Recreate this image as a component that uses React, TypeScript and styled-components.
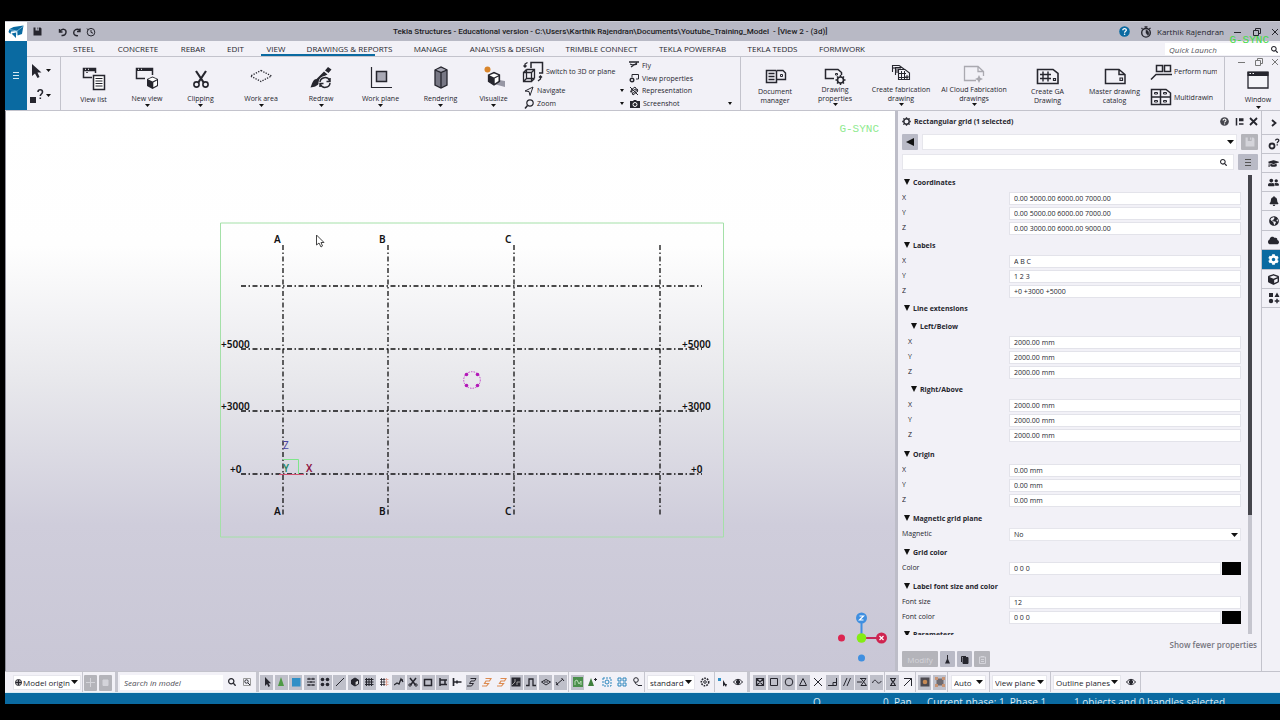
import React from "react";
import styled, { createGlobalStyle, css } from "styled-components";
import {
  FaBell, FaCloud, FaCog, FaCube, FaGlobeAmericas, FaGraduationCap, FaSearch, FaUserFriends,
} from "react-icons/fa";

const ink = "#26262e";
const blue = "#0a6aa1";
const panelBg = "#f2f1f7";
const line = "#c3c3cc";

const GlobalStyle = createGlobalStyle`
  * { box-sizing: border-box; }
  body { margin: 0; background: #000; font-family: "Open Sans", "Noto Sans", sans-serif; font-size: 7px; color: ${ink}; overflow: hidden; }
  button, input, select { font: inherit; color: inherit; border: 0; margin: 0; padding: 0; border-radius: 0; background: none; outline: none; }
  svg { display: block; flex: none; }
`;

const Screen = styled.div`
  height: 100vh;
  padding: 21px 0 16px 5px;
  display: flex;
  flex-direction: column;
`;

/* ---------- title bar ---------- */

const TitleBar = styled.header`
  flex: 0 0 20px;
  display: flex;
  align-items: center;
  background: #b8b9c5;
  border-top: 1px solid #c9cad3;
  font-size: 8px;
`;
const LogoTile = styled.div`
  width: 22px;
  align-self: stretch;
  background: #fff;
  display: grid;
  place-items: center;
`;
const QuickTools = styled.div`
  flex: 0 0 366px;
  display: flex;
  align-items: center;
  padding-left: 5px;
  gap: 2px;
`;
const IconButton = styled.button<{ $w?: number; $gap?: number }>`
  width: ${(p) => p.$w ?? 12}px;
  height: 14px;
  margin-right: ${(p) => p.$gap ?? 0}px;
  display: grid;
  place-items: center;
  flex: none;
`;
const WindowTitle = styled.h1`
  flex: 1;
  margin: 0;
  font-family: Roboto, "Open Sans", sans-serif;
  font-size: 8px;
  font-weight: 500;
  color: #1b1b22;
  white-space: pre;
`;
const Account = styled.div`
  display: flex;
  align-items: center;
  gap: 5px;
`;
const WindowButtons = styled.div`
  position: relative;
  display: flex;
  align-items: center;
  justify-content: flex-end;
  width: 56px;
  gap: 7px;
  overflow: visible;
`;
const SyncMark = styled.span<{ $faint?: boolean; $top: number; $right: number }>`
  position: absolute;
  top: ${(p) => p.$top}px;
  right: ${(p) => p.$right}px;
  font: 11px/12px "Liberation Mono", monospace;
  color: ${(p) => (p.$faint ? "#8eea8e" : "#42dc42")};
  pointer-events: none;
  z-index: 2;
`;

/* ---------- ribbon ---------- */

const HeaderBody = styled.div`
  flex: 0 0 70px;
  display: flex;
  background: ${panelBg};
  border-bottom: 1px solid ${line};
`;
const MenuButton = styled.button`
  flex: 0 0 22px;
  background: ${blue};
  display: grid;
  place-items: center;
`;
const RibbonColumn = styled.div`
  flex: 1;
  min-width: 0;
  display: flex;
  flex-direction: column;
`;
const TabBar = styled.nav`
  flex: 0 0 16px;
  display: flex;
  padding-left: 35px;
  border-bottom: 1px solid ${line};
`;
const Tab = styled.button<{ $w: number; $active?: boolean }>`
  position: relative;
  flex: 0 0 ${(p) => p.$w}px;
  font-size: 8px;
  text-align: center;
  white-space: nowrap;
  ${(p) => p.$active && css`
    &::after {
      content: "";
      position: absolute;
      left: 6px;
      bottom: 0;
      width: 114px;
      height: 2px;
      background: ${blue};
    }
  `}
`;
const QuickLaunch = styled.label`
  margin: 2px 0 1px auto;
  width: 115px;
  background: #fff;
  display: flex;
  align-items: center;
  padding: 0 2px 0 4px;
  overflow: hidden;
  input { flex: 1; min-width: 0; font-style: italic; font-size: 8px; }
  input::placeholder { color: #55555d; opacity: 1; }
`;
const Ribbon = styled.div`
  flex: 1;
  display: flex;
  min-height: 0;
`;
const PickTools = styled.div`
  flex: 0 0 34px;
  margin-right: 6px;
  border-right: 1px solid ${line};
  padding: 1px 0 2px 2px;
  display: flex;
  flex-direction: column;
  justify-content: space-around;
`;
const PickButton = styled.button`
  display: flex;
  align-items: center;
  gap: 2px;
`;
const Command = styled.button<{ $w: number; $two?: boolean; $off?: boolean; $top: number }>`
  flex: 0 0 ${(p) => p.$w}px;
  display: flex;
  flex-direction: column;
  align-items: center;
  justify-content: flex-start;
  padding-top: ${(p) => p.$top}px;
  line-height: ${(p) => (p.$two ? 9 : 12)}px;
  white-space: pre;
  text-align: center;
  > svg:first-child { opacity: ${(p) => (p.$off ? 0.35 : 1)}; margin-bottom: ${(p) => (p.$two ? 0 : 3)}px; }
  > svg + span + svg { margin-top: ${(p) => (p.$two ? 0 : -1)}px; }
`;
const Stack = styled.div<{ $w: number; $clip?: boolean }>`
  flex: 0 0 ${(p) => p.$w}px;
  display: flex;
  flex-direction: column;
  justify-content: space-around;
  overflow: ${(p) => (p.$clip ? "hidden" : "visible")};
  padding-top: 2px;
`;
const StackButton = styled.button<{ $pad?: number; $gap?: number }>`
  display: flex;
  align-items: center;
  gap: ${(p) => p.$gap ?? 3}px;
  padding-left: ${(p) => p.$pad ?? 0}px;
  white-space: nowrap;
  > svg:nth-of-type(2) { margin-left: auto; }
`;
const Rule = styled.div`
  flex: 0 0 1px;
  margin: 0 4px 0 8px;
  background: ${line};
`;
const WindowPane = styled.div`
  flex: 1 0 55px;
  margin-left: 7px;
  border-left: 1px solid ${line};
  display: flex;
  flex-direction: column;
  align-items: flex-end;
`;
const MdiButtons = styled.div`
  display: flex;
  gap: 5px;
  height: 10px;
  color: #777;
  button { height: 10px; }
`;
const WindowCommand = styled.button`
  width: 44px;
  display: flex;
  flex-direction: column;
  align-items: center;
  padding-top: 4px;
  line-height: 12px;
  > span { margin-top: 5px; }
`;

/* ---------- work space ---------- */

const Workspace = styled.main`
  flex: 1;
  min-height: 0;
  display: flex;
`;
const Viewport = styled.section`
  position: relative;
  flex: 1;
  min-width: 0;
  border-left: 1px solid #8f8f9a;
  background: linear-gradient(#fff 0, #fefefe 24%, #e8e8ec 48%, #cfcddb 74%, #c9c7d6 100%);
  svg.scene { width: 100%; height: 100%; }
  svg.scene text { font-family: "Noto Sans", sans-serif; font-size: 10px; font-weight: 600; fill: #111; }
`;
const Compass = styled.div`
  position: absolute;
  right: 5px;
  bottom: 8px;
`;

const Panel = styled.aside`
  flex: 0 0 367px;
  display: flex;
  flex-direction: column;
  background: ${panelBg};
  border-left: 3px solid #bdbdc8;
  border-right: 1px solid ${line};
  padding: 1px 3px 4px 4px;
`;
const PanelHeader = styled.div`
  flex: 0 0 18px;
  display: flex;
  align-items: center;
  gap: 3px;
  h2 { flex: 1; margin: 0; font-size: 7px; font-weight: 700; }
`;
const PanelBar = styled.div`
  flex: 0 0 16px;
  display: flex;
  align-items: stretch;
  gap: 4px;
  margin-top: 4px;
`;
const GreyButton = styled.button<{ $w: number; $off?: boolean }>`
  flex: 0 0 ${(p) => p.$w}px;
  height: 16px;
  background: ${(p) => (p.$off ? "#b4b4ba" : "#b9bac6")};
  border-radius: 1px;
  color: ${(p) => (p.$off ? "#d4d4da" : ink)};
  display: grid;
  place-items: center;
  font-size: 8px;
`;
const SearchBox = styled.label`
  flex: 1;
  background: #fff;
  border: 1px solid #e6e6ec;
  display: flex;
  align-items: center;
  padding: 0 6px;
  input { flex: 1; min-width: 0; }
`;
const SelectWrap = styled.label<{ $w?: number; $size?: number }>`
  position: relative;
  flex: ${(p) => (p.$w ? `0 0 ${p.$w}px` : "1")};
  display: flex;
  align-items: center;
  background: #fff;
  border: 1px solid #e6e6ec;
  padding-left: ${(p) => (p.$w ? 1 : 3)}px;
  font-size: ${(p) => p.$size ?? 7}px;
  select { flex: 1; min-width: 0; appearance: none; align-self: stretch; padding-left: 1px; }
  > svg:last-child { position: absolute; right: 2px; pointer-events: none; }
`;
const ScrollArea = styled.div`
  flex: 1;
  min-height: 0;
  margin-top: 3px;
  display: flex;
`;
const Properties = styled.div`
  flex: 1;
  min-width: 0;
  overflow: hidden;
`;
const ScrollTrack = styled.div`
  flex: 0 0 4px;
  margin: 2px 6px 1px 7px;
  background: #c5c5ce;
  &::before { content: ""; display: block; height: 74%; background: #45454c; }
`;
const Section = styled.section<{ $end?: number }>`
  padding-bottom: ${(p) => p.$end ?? 0}px;
`;
const SectionTitle = styled.h3<{ $nested?: boolean }>`
  margin: 0;
  height: 18px;
  padding-left: ${(p) => (p.$nested ? 9 : 2)}px;
  display: flex;
  align-items: center;
  gap: 3px;
  font-size: 7px;
  font-weight: 700;
`;
const Row = styled.label<{ $nested?: boolean }>`
  height: 15px;
  display: flex;
  align-items: center;
  padding-left: ${(p) => (p.$nested ? 6 : 0)}px;
  > span { flex: 0 0 ${(p) => (p.$nested ? 101 : 107)}px; line-height: 10px; padding-bottom: 2px; }
  > input { flex: 1; min-width: 0; height: 13px; background: #fff; border: 1px solid #e3e3ea; padding: 0 4px; }
  > label, > div { height: 13px; }
`;
const Swatch = styled.button`
  flex: 0 0 19px;
  height: 13px;
  margin-left: 1px;
  background: #000;
`;
const FewerLink = styled.a`
  align-self: flex-end;
  margin: 4px 1px 1px 0;
  font-size: 8px;
  line-height: 11px;
  font-weight: 600;
  color: #75757e;
  text-decoration: none;
`;
const PanelActions = styled.div`
  display: flex;
  gap: 2px;
`;

const SideTabs = styled.nav`
  flex: 0 0 18px;
  background: ${panelBg};
  display: flex;
  flex-direction: column;
`;
const SideTab = styled.button<{ $h?: number; $active?: boolean }>`
  height: ${(p) => p.$h ?? 19}px;
  border-bottom: 1px solid ${line};
  padding-left: 5px;
  display: grid;
  place-items: center;
  background: ${(p) => (p.$active ? blue : "transparent")};
  color: ${(p) => (p.$active ? "#fff" : ink)};
`;

/* ---------- bottom bars ---------- */

const ToolBar = styled.footer`
  flex: 0 0 22px;
  display: flex;
  align-items: center;
  background: ${panelBg};
  border-top: 1px solid ${line};
  border-bottom: 1px solid #d9ecf4;
  padding-left: 8px;
  > * { height: 15px; }
`;
const Divider = styled.div<{ $l?: number; $r?: number; $thick?: boolean }>`
  flex: 0 0 ${(p) => (p.$thick ? 3 : 1)}px;
  && { height: 20px; }
  margin: 0 ${(p) => p.$r ?? 2}px 0 ${(p) => p.$l ?? 2}px;
  background: #c6c6cf;
`;
const ToolGroup = styled.div<{ $w: number; $single?: boolean }>`
  flex: 0 0 ${(p) => p.$w}px;
  display: flex;
  justify-content: ${(p) => (p.$single ? "center" : "space-between")};
`;
const Tool = styled.button<{ $on?: boolean }>`
  width: 13px;
  height: 15px;
  display: grid;
  place-items: center;
  background: ${(p) => (p.$on ? "#bfc0ca" : "transparent")};
`;
const ModelSearch = styled.label`
  flex: 0 0 103px;
  background: #fff;
  display: flex;
  padding-left: 4px;
  input { flex: 1; min-width: 0; font-style: italic; font-size: 8px; }
  input::placeholder { color: #4c4c54; opacity: 1; }
`;
const StatusBar = styled.div`
  flex: 0 0 11px;
  display: flex;
  justify-content: flex-end;
  background: ${blue};
  color: #dcecf5;
  font-size: 10px;
  line-height: 18px;
  overflow: hidden;
`;
const StatusItem = styled.span<{ $w: number }>`
  flex: 0 0 ${(p) => p.$w}px;
  white-space: pre;
`;

/* ---------- drawings ---------- */

const Glyph = ({ s = 10, w, h, children, sw = 1 }: { s?: number; w?: number; h?: number; sw?: number; children: React.ReactNode }) => (
  <svg width={w ?? s} height={h ?? s} viewBox={`0 0 ${w ?? s} ${h ?? s}`} fill="none" stroke="currentColor" strokeWidth={sw} aria-hidden="true">
    {children}
  </svg>
);
const Caret = ({ w = 5, h = 3 }: { w?: number; h?: number }) => (
  <Glyph w={w} h={h}><path d={`M0 0H${w}L${w / 2} ${h}Z`} fill="#111" stroke="none" /></Glyph>
);
const Minimize = () => <Glyph><path d="M1 5.5H8" /></Glyph>;
const Restore = () => <Glyph><path d="M1.5 3.5h5v5h-5zM3.5 3V1.500H8.500V6.500H7" /></Glyph>;
const Close = () => <Glyph><path d="M2 2L8 8M8 2L2 8" /></Glyph>;
const Undo = () => <Glyph sw={1.4}><path d="M1.500 2V5H4.500M2 4.500C4 1 8.500 2 8 5.500C7.700 8 5.500 8.700 3.500 8.500" /></Glyph>;
const Redo = () => <Glyph sw={1.4}><path d="M8 1.500V4.500H5M7.800 3.500C5 .8 1.500 3 1.700 6C1.900 8 3.500 9 6 8.600" /></Glyph>;
const Clock = () => (
  <Glyph><circle cx="5" cy="5.200" r="3.800" /><path d="M5 3V5.400L7 6.200M1 1.500L2.500 3.200" /></Glyph>
);
const Stopwatch = () => (
  <Glyph s={12}><circle cx="6" cy="6.800" r="4.300" strokeWidth="1.400" /><path d="M6 2.500V.5M4.500 .8H7.500M9.300 3L10.500 1.800M2.500 3L1.500 2" strokeWidth="1.200" /><path d="M6 4V7L8 9.500A3.300 3.300 0 0 0 6 4Z" fill="currentColor" strokeWidth=".5" /></Glyph>
);
const Save = ({ s = 9 }: { s?: number }) => (
  <svg width={s} height={s} viewBox="0 0 9 9" fill="currentColor"><path d="M.5 .5H2.500V3.500H6V.5H7.500L8.500 1.500V8.500H.5ZM4.500 .5H5.300V2.500H4.500Z" /></svg>
);
const Help = ({ bg = blue, s = 11 }: { bg?: string; s?: number }) => (
  <svg width={s} height={s} viewBox="0 0 11 11"><circle cx="5.500" cy="5.500" r="5.300" fill={bg} /><path d="M3.800 4.200C3.800 2 7.400 2 7.300 4.200C7.200 5.300 5.600 5.300 5.600 6.700" fill="none" stroke="#fff" strokeWidth="1.300" /><circle cx="5.600" cy="8.300" r=".8" fill="#fff" /></svg>
);
const GearQ = () => (
  <Glyph s={12}><circle cx="4" cy="8" r="2.500" strokeWidth="1.800" /><path d="M7.500 2.500C7.800 .6 11 .8 10.800 2.600C10.600 3.800 9.200 3.800 9.200 5.200M9.200 6.300V7.500" strokeWidth="1.300" /></Glyph>
);
const Shapes = () => (
  <Glyph s={12}><g fill="currentColor" stroke="none"><path d="M1 1H5V5H1ZM9 .5L11.500 5H6.500Z" /><circle cx="3" cy="9" r="2.200" /><path d="M8.300 6.700H9.700V8.300H11.300V9.700H9.700V11.300H8.300V9.700H6.700V8.300H8.300Z" /></g></Glyph>
);
const Cog = () => <Glyph s={9}><circle cx="4.500" cy="4.500" r="2.700" strokeWidth="1.400" /><path d="M4.500 .2V1.500M4.500 7.500V8.800M.2 4.500H1.500M7.500 4.500H8.800M1.400 1.400L2.300 2.300M6.700 6.700L7.600 7.600M7.600 1.400L6.700 2.300M1.400 7.600L2.300 6.700" strokeWidth="1.300" /></Glyph>;

const ribbonIcons: Record<string, React.ReactNode> = {
  list: <Glyph s={24}><path d="M10 10.500H1.500V1.500H13.500V6M5 5V6M1.500 3.500H13.500" strokeWidth="1.500" /><path d="M1 1H14V4H1Z" fill="currentColor" stroke="none" /><path d="M3 2.300H4M6 2.300H7" stroke="#fff" /><path d="M11.500 8.500H22.500V22.500H11.500Z" strokeWidth="1.500" fill="#fff" /><path d="M13.500 11.500H20.500M13.500 14H20.500M13.500 16.500H20.500M13.500 19H20.500" strokeWidth="1.200" /></Glyph>,
  newview: <Glyph s={24}><path d="M10 12.500H1.500V2.500H17.500V9" strokeWidth="1.500" /><path d="M1 2H18V5H1Z" fill="currentColor" stroke="none" /><path d="M3 3.300H4M6 3.300H7" stroke="#fff" /><path d="M12 13L17.500 10.500L23 13V20L17.500 23L12 20Z" fill={ink} stroke="none" /><path d="M13 13.300L17.500 11.500L22 13.300L17.500 15.500ZM18.300 16.500L22 14.600V19.300L18.300 21.300Z" fill="#fff" stroke="none" /></Glyph>,
  cut: <Glyph s={24}><g transform="translate(0 3)"><path d="M7 2L15 14M17 2L9 14" strokeWidth="2.200" /><circle cx="7.500" cy="15.500" r="2.600" strokeWidth="1.600" /><circle cx="16.500" cy="15.500" r="2.600" strokeWidth="1.600" /></g></Glyph>,
  area: <Glyph s={24}><path d="M12 4.500L22.500 10L12 15.500L1.500 10Z" strokeDasharray="1.300 1.300" strokeWidth="1.300" /></Glyph>,
  redraw: <Glyph s={24}><path d="M19 1L22.500 3.500L19.500 7L16 4.500ZM15 5.500L18.500 8.500C14 10 11 13 10 17C9 20 5 21 1.500 21.500C3 18 4 13 7.500 13Z" fill="currentColor" stroke="none" /><circle cx="16" cy="16.500" r="6.500" fill={panelBg} stroke="none" /><path d="M11 16C11.500 11 18.500 10 20.500 14.500M21 12V15.500H17.500M21 17C20.500 22 13.500 23 11.500 18.500M11 21V17.500H14.500" strokeWidth="1.500" /></Glyph>,
  plane: <Glyph s={24}><path d="M2.500 1V21.500H23" strokeWidth="1.200" /><path d="M7.500 5.500H17.500V15.500H7.500Z" fill="#a9a9b5" strokeWidth="1.500" /></Glyph>,
  render: <Glyph s={24}><path d="M6 4L12 1L18 4V19L12 22L6 19Z" fill="#777784" strokeWidth="1.300" /><path d="M6 4L12 6.500L18 4M12 6.500V22" strokeWidth="1.300" /><path d="M7.500 3.800L12 2L16.500 3.800L12 5.500Z" fill="#a9a9b5" stroke="none" /></Glyph>,
  visual: <Glyph s={24}><circle cx="5.500" cy="3.500" r="3" fill="#d9852b" stroke="none" /><path d="M17 14L23 15V21L12 18Z" fill="#9797a4" stroke="none" /><path d="M6.500 9L12 6.500L17.500 9V15.500L12 19L6.500 15.500Z" fill={ink} strokeWidth="1.300" /><path d="M7.500 9.200L12 7.500L16.500 9.200L12 11.500ZM12.700 12.500L16.500 10.500V15L12.700 17.500Z" fill="#fff" stroke="none" /></Glyph>,
  docs: <Glyph w={24} h={20}><g transform="translate(0 -1)"><path d="M13 4.500H3.500V16.500H13.500V4.500M5.500 7.500H11.500M5.500 10.500H11.500M5.500 13.500H11.500" strokeWidth="1.500" /><path d="M13.500 4.500H20L22.500 7V13.500H13.500" strokeWidth="1.400" /><path d="M17.500 8.500H19.500V10.500H17.500Z" /></g></Glyph>,
  props: <Glyph w={24} h={20}><path d="M11 13.500H2.500V4.500H15L18.500 7.500V10" strokeWidth="1.500" /><path d="M12.500 8.500H14.500V10H12.500Z" /><circle cx="17.500" cy="15" r="3" strokeWidth="1.600" /><path d="M17.500 10V12M17.500 18V20M12.500 15H14.500M20.500 15H22.500M14 11.500L15.500 13M19.500 17L21 18.500M21 11.500L19.500 13M14 18.500L15.500 17" strokeWidth="1.500" /></Glyph>,
  fab: <Glyph w={24} h={20}><g transform="translate(0 -1)"><path d="M3.500 8V1.500H10L12.500 3M6.500 11V3.500H13L15.500 5.500M10 5.500H16L20.500 9V15.500H9.500V5.500ZM5 3V5M8 6V9M6 5H12" fill="none" strokeWidth="1.100" /><path d="M10 9.500H17M10 13.500H19M12.500 7V15M15.500 7V15" /><path d="M17 12H19V14H17Z" /></g></Glyph>,
  cloud: <Glyph w={24} h={20}><path d="M14 15.500H2.500V1.500H16L21.500 6.500V11M16 1.500V6.500H21.500" strokeWidth="1.300" /><path d="M17 10L18.300 12.700L21 14L18.300 15.300L17 18L15.700 15.300L13 14L15.700 12.700Z" fill="currentColor" stroke="none" /></Glyph>,
  ga: <Glyph w={24} h={20}><g transform="translate(0 -2)"><path d="M1.500 4.500H17L22 8.500V18.500H1.500Z" strokeWidth="1.600" /><path d="M4 9.500H15M4 13.500H15M7 6.500V16.500M12 6.500V16.500" strokeWidth="1.400" /><path d="M17.500 13.500H19.500V15.500H17.500Z" strokeWidth="1.200" /></g></Glyph>,
  master: <Glyph w={24} h={20}><g transform="translate(0 -2)"><path d="M2.500 4.500H16L22 9.500V18.500H2.500ZM16 4.500V9.500H22" strokeWidth="1.500" /><path d="M17 13H19.500V15.500H17Z" strokeWidth="1.200" /></g></Glyph>,
};

const small: Record<string, React.ReactNode> = {
  arrow: <Glyph><path d="M3 0V9L5 7L6.500 10L8 9L6.500 6.300H9Z" fill="currentColor" stroke="none" /></Glyph>,
  cone: <Glyph><path d="M5 0L8 9H2Z" fill="#4f9a45" stroke="none" /></Glyph>,
  square: <Glyph><path d="M1 1H9.500V9.500H1Z" fill="#2f8fc6" stroke="none" /></Glyph>,
  waves: <Glyph><path d="M1 2H9M1 5H9M1 8H9M3 .8V3M7 .8V3M5 4V6M3 7V9M7 7V9" /></Glyph>,
  dots: <Glyph><g fill="currentColor" stroke="none"><circle cx="2.500" cy="2.500" r="1.800" /><circle cx="7.500" cy="2.500" r="1.800" /><circle cx="2.500" cy="7.500" r="1.800" /><circle cx="7.500" cy="7.500" r="1.800" /></g></Glyph>,
  line: <Glyph><path d="M1 9L9 1" /></Glyph>,
  cube: <Glyph><path d="M1.500 3L5 1L8.500 3V7L5 9L1.500 7Z" fill={ink} /><path d="M5.600 5L8 3.800V6.700L5.600 8Z" fill="#ddd" stroke="none" /></Glyph>,
  grid: <Glyph><path d="M1 2.500H9.500M1 5H9.500M1 7.500H9.500M2.500 1V9M5 1V9M7.500 1V9" strokeWidth="1.100" /></Glyph>,
  gridred: <Glyph><path d="M1 2.500H6M1 5H6M1 7.500H6M2.500 1V9M5 1V9" strokeWidth=".8" /><path d="M6 2.500H9.500M6 5H9.500M6 7.500H9.500M7.500 1V9" stroke="#e0a79a" /></Glyph>,
  curve: <Glyph><path d="M0 8L3 6L5 7L7 2L9 5M6 3H9" strokeWidth="1.300" /></Glyph>,
  scissors: <Glyph><path d="M2 1L7.500 8M8 1L2.500 8" strokeWidth="1.500" /><circle cx="2" cy="8" r="1.200" /><circle cx="8" cy="8" r="1.200" /></Glyph>,
  window: <Glyph><path d="M1.500 2.500H8.500V8.500H1.500ZM1 2.500H9" strokeWidth="1.500" /></Glyph>,
  beam: <Glyph><path d="M2 1V9M2 3H9M2 7.500H9M7 3V7.500" strokeWidth="1.500" /></Glyph>,
  bolt: <Glyph><path d="M1.500 1V9M1.500 5H9.500M5 3.500V6.500" strokeWidth="1.700" /></Glyph>,
  weld: <Glyph><path d="M3.500 1.500H9L7.500 4H4L2.500 6.500H6.500L4.500 9H0" /></Glyph>,
  weldred: <Glyph><path d="M3.500 1.500H9L7.500 4H4L2.500 6.500H6.500L4.500 9H0" stroke="#dc8a50" strokeWidth="1.200" /></Glyph>,
  fill: <Glyph><path d="M.5 .5H9.500V9.500H.5Z" fill={ink} stroke="none" /><path d="M1 8L4 5V2M6 8V5H9" stroke="#999" /></Glyph>,
  clamp: <Glyph><path d="M0 8.500H3V2H7V8.500H10" strokeWidth="1.300" /></Glyph>,
  lens: <Glyph><path d="M.5 5L5 2.500L9.500 5L5 8Z" /><path d="M3 5H7" /></Glyph>,
  slope: <Glyph><path d="M1 8L8 2M1 5L3 8.500M6.500 1L9 4" /></Glyph>,
  tree: <Glyph><path d="M0 0H10V10H0Z" fill="#4b8f4c" stroke="none" /><path d="M2 8V4L4 3L6 7L8 4V8" stroke="#b9dcb4" /></Glyph>,
  coneplus: <Glyph><path d="M4 1L7 9H1Z" fill="#3f7f3c" stroke="none" /><path d="M7 2.500H10M8.500 1V4" /></Glyph>,
  framed: <Glyph><path d="M1 1H9V9H1Z" stroke="#2c86bd" strokeDasharray="2 1" /><circle cx="5" cy="5" r="2" stroke="#2c86bd" /></Glyph>,
  cells: <Glyph><path d="M1 1H4V4H1ZM6 1H9V4H6ZM1 6H4V9H1ZM6 6H9V9H6Z" stroke="#2c86bd" /></Glyph>,
  hook: <Glyph><circle cx="4" cy="3" r="2.300" /><path d="M3 5C3 8 6 7 6 8.500H10" /></Glyph>,
  gear: <Glyph><circle cx="5" cy="5" r="1.300" /><circle cx="5" cy="5" r="3.700" strokeWidth="1.600" strokeDasharray="1.700 1" /></Glyph>,
  pick: <Glyph><path d="M0 1H3V4H0Z" fill="#2f8fc6" stroke="none" /><path d="M5 3V9.500L6.500 8L8 10L9 7H7.500Z" fill="currentColor" stroke="none" /></Glyph>,
  eye: <Glyph><path d="M.5 5C3 1.500 7 1.500 9.500 5C7 8.500 3 8.500 .5 5Z" /><circle cx="5" cy="5" r="1.700" fill="currentColor" /></Glyph>,
  boxx: <Glyph sw={1.2}><path d="M1.500 1.500H8.500V8.500H1.500ZM1.500 1.500L8.500 8.500M8.500 1.500L1.500 8.500" /></Glyph>,
  box: <Glyph><path d="M1.500 1.500H8.500V8.500H1.500Z" /></Glyph>,
  circle: <Glyph><circle cx="5" cy="5" r="3.800" /></Glyph>,
  tri: <Glyph><path d="M5 1.500L8.500 8.500H1.500Z" /></Glyph>,
  cross: <Glyph><path d="M1 1L9 9M9 1L1 9" /></Glyph>,
  perp: <Glyph><path d="M0 8.500H8.500V1M5 8V5.500H8" /></Glyph>,
  para: <Glyph><path d="M1.500 9L5 1M5 9L8.500 1" /></Glyph>,
  glassl: <Glyph><path d="M3 1.500H9L4 8.500H9.500L4 1.500M0 5H5" /></Glyph>,
  tilde: <Glyph><path d="M.5 6C2 2 4 3 5 5S8 6 9.500 4" /></Glyph>,
  glass: <Glyph><path d="M2 1.500H8M2 8.500H8M3 1.500C3 5 7 5 7 8.500M7 1.500C7 5 3 5 3 8.500" strokeWidth="1.200" /></Glyph>,
  ne: <Glyph><path d="M1 9L8.500 1.500M1 1.500H8.500V9" /></Glyph>,
  spot: <Glyph><path d="M.5 .5H9.500V9.500H.5Z" fill="#4d4a50" stroke="none" /><circle cx="5" cy="5" r="2.300" fill="#c68a55" stroke="none" /></Glyph>,
  handles: <Glyph><path d="M1.500 1.500H8.500V8.500H1.500Z" fill="#6e6a70" stroke="none" /><path d="M0 0H3V3H0ZM7 0H10V3H7ZM0 7H3V10H0ZM7 7H10V10H7Z" fill="#c99575" stroke="none" /></Glyph>,
};

/* ---------- data ---------- */

const tabs: [string, number][] = [
  ["STEEL", 44], ["CONCRETE", 64], ["REBAR", 46], ["EDIT", 39], ["VIEW", 42], ["DRAWINGS & REPORTS", 105],
  ["MANAGE", 57], ["ANALYSIS & DESIGN", 96], ["TRIMBLE CONNECT", 93], ["TEKLA POWERFAB", 89],
  ["TEKLA TEDDS", 71], ["FORMWORK", 68],
];
type Cmd = { icon: string; label: string; w: number; caret?: boolean; two?: boolean; off?: boolean };
const viewCommands: Cmd[] = [
  { icon: "list", label: "View list", w: 53 },
  { icon: "newview", label: "New view", w: 54, caret: true },
  { icon: "cut", label: "Clipping", w: 53, caret: true },
  { icon: "area", label: "Work area", w: 68, caret: true },
  { icon: "redraw", label: "Redraw", w: 52, caret: true },
  { icon: "plane", label: "Work plane", w: 67, caret: true },
  { icon: "render", label: "Rendering", w: 53, caret: true },
  { icon: "visual", label: "Visualize", w: 53, caret: true },
];
const drawingCommands: Cmd[] = [
  { icon: "docs", label: "Document\nmanager", w: 60, two: true },
  { icon: "props", label: "Drawing\nproperties", w: 60, two: true, caret: true },
  { icon: "fab", label: "Create fabrication\ndrawing", w: 72, two: true, caret: true },
  { icon: "cloud", label: "AI Cloud Fabrication\ndrawings", w: 74, two: true, caret: true, off: true },
  { icon: "ga", label: "Create GA\nDrawing", w: 73, two: true },
  { icon: "master", label: "Master drawing\ncatalog", w: 61, two: true },
];
type Field = { label: string; value: string; kind?: "color" | "select" };
type Group = { title: string; nested?: boolean; end?: number; fields: Field[] };
const xyz = (x: string, y: string, z: string): Field[] => [
  { label: "X", value: x }, { label: "Y", value: y }, { label: "Z", value: z },
];
const mm = "2000.00 mm";
const groups: Group[] = [
  { title: "Coordinates", fields: xyz("0.00 5000.00 6000.00 7000.00", "0.00 5000.00 6000.00 7000.00", "0.00 3000.00 6000.00 9000.00") },
  { title: "Labels", fields: xyz("A B C", "1 2 3", "+0 +3000 +5000") },
  { title: "Line extensions", fields: [] },
  { title: "Left/Below", nested: true, fields: xyz(mm, mm, mm) },
  { title: "Right/Above", nested: true, end: 2, fields: xyz(mm, mm, mm) },
  { title: "Origin", end: 1, fields: xyz("0.00 mm", "0.00 mm", "0.00 mm") },
  { title: "Magnetic grid plane", end: 1, fields: [{ label: "Magnetic", value: "No", kind: "select" }] },
  { title: "Grid color", end: 1, fields: [{ label: "Color", value: "0 0 0", kind: "color" }] },
  { title: "Label font size and color", fields: [{ label: "Font size", value: "12" }, { label: "Font color", value: "0 0 0", kind: "color" }] },
  { title: "Parameters", fields: [] },
];
const selectTools = "arrow cone square waves dots line cube grid gridred- curve scissors window beam bolt- weld weldred- weldred- fill clamp lens slope".split(" ");
const modelTools = "tree coneplus- framed- cells- hook-".split(" ");
const snapTools = "boxx box circle tri cross- perp para glassl tilde".split(" ");

const Tools = ({ names, w }: { names: string[]; w: number }) => (
  <ToolGroup $w={w} $single={names.length === 1}>
    {names.map((n, i) => {
      const key = n.replace("-", "");
      return <Tool key={i} $on={!n.endsWith("-")} aria-label={key}>{small[key]}</Tool>;
    })}
  </ToolGroup>
);
const CommandButton = ({ icon, label, w, caret, two, off }: Cmd) => (
  <Command $w={w} $two={two} $off={off} $top={two ? (caret ? 8 : 10) : caret ? 9 : 10}>
    {ribbonIcons[icon]}
    <span>{label}</span>
    {caret && <Caret />}
  </Command>
);
const Select = ({ label, value, w, size, icon }: { label: string; value: string; w?: number; size?: number; icon?: React.ReactNode }) => (
  <SelectWrap $w={w} $size={size}>
    {icon}
    <select aria-label={label} defaultValue={value}><option>{value}</option></select>
    <Caret w={7} h={4} />
  </SelectWrap>
);

const Scene = () => {
  const columns = [283, 388, 514, 660];
  const rows = [286, 349, 411, 474];
  return (
    <svg className="scene" role="img" aria-label="Grid view">
      <g transform="translate(-6 -111)" fill="none">
        <path d="M220.500 223H723.500V537H220.500Z" stroke="#a4e0a8" />
        <g stroke="#111" strokeWidth="1.300" strokeDasharray="5 2.500 1.500 2.500">
          {columns.map((x) => <path key={x} d={`M${x} 245V516`} />)}
          {rows.map((y) => <path key={y} d={`M241 ${y}H702`} />)}
        </g>
        {[243, 515].map((y) => (
          <g key={y}><text x="274" y={y}>A</text><text x="379" y={y}>B</text><text x="505" y={y}>C</text></g>
        ))}
        {[348, 410].map((y, i) => (
          <g key={y}><text x="221" y={y}>{i ? "+3000" : "+5000"}</text><text x="682" y={y}>{i ? "+3000" : "+5000"}</text></g>
        ))}
        <text x="230" y="473">+0</text><text x="691" y="473">+0</text>
        <path d="M283 459.500H298.500V474" stroke="#7fe58a" />
        <path d="M279 474.500H304" stroke="#d05070" />
        <text x="283" y="449" style={{ fill: "#4a44a0", fontWeight: 400 }}>Z</text>
        <text x="283" y="472" style={{ fill: "#1f8a68" }}>Y</text>
        <text x="306" y="472" style={{ fill: "#8c1140" }}>X</text>
        <circle cx="472" cy="380" r="8.300" stroke="#c23fc9" strokeDasharray="1.500 1.200" />
        <g fill="#b317b8"><circle cx="466.500" cy="374.500" r="1.800" /><circle cx="477.500" cy="374.500" r="1.800" /><circle cx="466.500" cy="385.500" r="1.800" /><circle cx="477.500" cy="385.500" r="1.800" /></g>
        <path d="M316.500 235V245L319 243L321 247L322.500 246L321 242.500H324Z" fill="#fff" stroke="#444" />
      </g>
    </svg>
  );
};

export default function App() {
  return (
    <Screen>
      <GlobalStyle />
      <TitleBar>
        <LogoTile>
          <svg width="16" height="14" viewBox="0 0 16 14"><path d="M5.500 2L15.500 .5L14 9L9.500 10.500L9 6L3 6.500L2.500 9L.5 7L1.500 4ZM3.500 8.500L8 7.500V13Z" fill={blue} /><path d="M1.500 4.500L9 6L15 1.500M9 6V10" stroke="#8fc3df" strokeWidth=".8" fill="none" /></svg>
        </LogoTile>
        <QuickTools>
          <IconButton aria-label="Save" $w={10} $gap={13}><Save /></IconButton>
          <IconButton aria-label="Undo"><Undo /></IconButton>
          <IconButton aria-label="Redo"><Redo /></IconButton>
          <IconButton aria-label="History"><Clock /></IconButton>
        </QuickTools>
        <WindowTitle>{"Tekla Structures - Educational version - C:\\Users\\Karthik Rajendran\\Documents\\Youtube_Training_Model  - [View 2 - (3d)]"}</WindowTitle>
        <Account>
          <IconButton aria-label="Help" $gap={5}><Help /></IconButton>
          <Stopwatch />
          <span>Karthik Rajendran</span>
        </Account>
        <WindowButtons>
          <IconButton aria-label="Minimize"><Minimize /></IconButton>
          <IconButton aria-label="Restore"><Restore /></IconButton>
          <IconButton aria-label="Close" $w={10}><Close /></IconButton>
          <SyncMark $top={9} $right={11}>G-SYNC</SyncMark>
        </WindowButtons>
      </TitleBar>

      <HeaderBody>
        <MenuButton aria-label="Menu"><Glyph w={6} h={7}><g stroke="#d5e8f2"><path d="M0 .5H6M0 3.500H6M0 6.500H6" /></g></Glyph></MenuButton>
        <RibbonColumn>
          <TabBar>
            {tabs.map(([name, w]) => <Tab key={name} $w={w} $active={name === "VIEW"}>{name}</Tab>)}
            <QuickLaunch><input aria-label="Quick Launch" placeholder="Quick Launch" /><FaSearch size={7} /></QuickLaunch>
          </TabBar>
          <Ribbon>
            <PickTools>
              <PickButton aria-label="Select">
                <Glyph w={15} h={16}><path d="M3 1V13L6 10.500L8.500 15L10.500 14L8.500 9.500H12.500Z" fill="currentColor" stroke="none" /></Glyph><Caret />
              </PickButton>
              <PickButton aria-label="Inquire">
                <Glyph w={15} h={16}><path d="M1 9H7V15H1Z" fill="currentColor" stroke="none" /><path d="M9 4C9 1 13.500 1 13.500 4C13.500 6 11.300 6 11.300 8M11.300 9.500V11" strokeWidth="1.600" /></Glyph><Caret />
              </PickButton>
            </PickTools>
            {viewCommands.map((c) => <CommandButton key={c.label} {...c} />)}
            <Stack $w={104}>
              <StackButton $pad={2} $gap={2}>
                <Glyph w={22} h={22}><path d="M9 7V1.500H20.500V12H17" strokeWidth="1.500" /><path d="M1.500 11.500H9.500V20.500H1.500ZM4.500 8.500H12.500V17.500M4.500 8.500V17.500H12.500M1.500 11.500L4.500 8.500M9.500 11.500L12.500 8.500M9.500 20.500L12.500 17.500M1.500 20.500L4.500 17.500" strokeWidth="1.300" /><path d="M5.500 1.500L3 3V6M1.500 4.500L3 6L4.500 4.500M16 20L18.500 18V15M17 16.500L18.500 15L20 16.500" strokeWidth="1.300" /></Glyph>
                <span>Switch to 3D or plane</span>
              </StackButton>
              <StackButton $pad={4}><Glyph><path d="M9 1L1 5L5 5.500L6 9.500Z" /></Glyph><span>Navigate</span><Caret w={4} /></StackButton>
              <StackButton $pad={4}><Glyph><circle cx="6" cy="4" r="3.200" strokeWidth="1.200" /><path d="M3.500 6.500L1 9.500" strokeWidth="1.500" /></Glyph><span>Zoom</span><Caret w={4} /></StackButton>
            </Stack>
            <Stack $w={108}>
              <StackButton $pad={5}><Glyph><path d="M0 2H10M1 4L4 5L8 4M2 7L8 3" strokeWidth="1.300" /></Glyph><span>Fly</span></StackButton>
              <StackButton $pad={5}><Glyph><path d="M3 4V1.500H9.500V6H7" /><circle cx="3" cy="7" r="1.800" strokeWidth="1.400" /></Glyph><span>View properties</span></StackButton>
              <StackButton $pad={5}><Glyph><path d="M1 1L9 9M2 4L6 1L9 5L4 9ZM1 6L7 3M3 8L9 3" /></Glyph><span>Representation</span></StackButton>
              <StackButton $pad={6}><Glyph><path d="M0 2H3L4 1H6L7 2H10V9H0Z" fill="currentColor" stroke="none" /><circle cx="5" cy="5.500" r="2" stroke="#fff" /></Glyph><span>Screenshot</span><Caret w={4} /></StackButton>
            </Stack>
            <Rule />
            {drawingCommands.map((c) => <CommandButton key={c.label} {...c} />)}
            <Stack $w={72} $clip>
              <StackButton $pad={5} $gap={2}>
                <Glyph w={22} h={18}><path d="M6.500 2.500H12.500V8.500H6.500ZM14.500 2.500H20.500V8.500H14.500ZM22 11.500H6L1 16.500" strokeWidth="1.500" /></Glyph>
                <span>Perform num</span>
              </StackButton>
              <StackButton $pad={5} $gap={2}>
                <Glyph w={22} h={18}><path d="M1.500 1.500H16L20.500 5V16.500H1.500ZM10.500 1.500V16.500M1.500 9H20.500" strokeWidth="1.500" /><path d="M4.500 4.500H7.500V6H4.500ZM13.500 4.500H16.500V6H13.500ZM4.500 12.500H7.500V14H4.500ZM13.500 12.500H16.500V14H13.500Z" /></Glyph>
                <span>Multidrawin</span>
              </StackButton>
            </Stack>
            <WindowPane>
              <MdiButtons>
                <IconButton aria-label="Minimize view"><Minimize /></IconButton>
                <IconButton aria-label="Restore view"><Restore /></IconButton>
                <IconButton aria-label="Close view" $w={10}><Close /></IconButton>
              </MdiButtons>
              <WindowCommand>
                <Glyph w={22} h={18}><path d="M1 1.500H21V17H1Z" strokeWidth="1.300" fill="#f4f4f8" /><path d="M.5 .5H21.500V5H.5Z" fill="currentColor" stroke="none" /><path d="M2.500 2.500H4M5.500 2.500H7" stroke="#fff" /></Glyph>
                <span>Window</span>
                <Caret />
              </WindowCommand>
            </WindowPane>
          </Ribbon>
        </RibbonColumn>
      </HeaderBody>

      <Workspace>
        <Viewport>
          <Scene />
          <SyncMark $faint $top={12} $right={16}>G-SYNC</SyncMark>
          <Compass>
            <svg width="54" height="54" viewBox="0 0 54 54" aria-label="View compass">
              <path d="M25.500 9V29" stroke="#3f8fe0" strokeWidth="2" /><path d="M26 29H44" stroke="#c42858" strokeWidth="2" />
              <circle cx="25.500" cy="9" r="5.500" fill="#3f8fe0" /><circle cx="45.500" cy="29" r="5.500" fill="#cf2450" />
              <circle cx="25.500" cy="29" r="4.800" fill="#84ec14" /><circle cx="5.500" cy="29" r="3.500" fill="#dc2450" /><circle cx="25.500" cy="49" r="3.500" fill="#3f8fe0" />
              <path d="M23.500 7H27.500L23.500 11H27.500M43.500 27L47.500 31M47.500 27L43.500 31" stroke="#fff" strokeWidth="1.200" fill="none" />
            </svg>
          </Compass>
        </Viewport>

        <Panel>
          <PanelHeader>
            <Cog />
            <h2>Rectangular grid (1 selected)</h2>
            <IconButton aria-label="Panel help"><Help bg="#45454d" s={9} /></IconButton>
            <IconButton aria-label="Panel layout"><Glyph s={9}><path d="M1.500 1V8.500M4 2H8.500M4 3.500H8.500M4 7H8.500" strokeWidth="1.500" /></Glyph></IconButton>
            <IconButton aria-label="Close panel" $w={10}><Glyph s={9} sw={1.8}><path d="M1 1L8 8M8 1L1 8" /></Glyph></IconButton>
          </PanelHeader>
          <PanelBar>
            <GreyButton $w={16} aria-label="Back"><Glyph s={8}><path d="M8 0V8L0 4Z" fill="#111" stroke="none" /></Glyph></GreyButton>
            <Select label="Saved properties" value="" />
            <GreyButton $w={17} $off aria-label="Save properties"><Save s={10} /></GreyButton>
          </PanelBar>
          <PanelBar>
            <SearchBox><input aria-label="Search properties" /><FaSearch size={7} /></SearchBox>
            <GreyButton $w={20} aria-label="Options"><Glyph w={6} h={7}><path d="M0 .5H6M0 3.500H6M0 6.500H6" stroke="#555" /></Glyph></GreyButton>
          </PanelBar>
          <ScrollArea>
            <Properties>
              {groups.map((g) => (
                <Section key={g.title} $end={g.end}>
                  <SectionTitle $nested={g.nested}><Caret w={6} h={6} />{g.title}</SectionTitle>
                  {g.fields.map((f) => (
                    <Row key={f.label} $nested={g.nested} as={f.kind === "select" ? "div" : "label"}>
                      <span>{f.label}</span>
                      {f.kind === "select" ? <Select label={f.label} value={f.value} /> : <input defaultValue={f.value} />}
                      {f.kind === "color" && <Swatch aria-label={`Pick ${f.label}`} />}
                    </Row>
                  ))}
                </Section>
              ))}
            </Properties>
            <ScrollTrack />
          </ScrollArea>
          <FewerLink href="#">Show fewer properties</FewerLink>
          <PanelActions>
            <GreyButton $w={36} $off>Modify</GreyButton>
            <GreyButton $w={15} aria-label="Apply"><Glyph s={9}><path d="M4 0H5V4L7 8.500H2L4 4Z" fill="currentColor" stroke="none" /></Glyph></GreyButton>
            <GreyButton $w={15} aria-label="Copy"><Glyph s={9}><path d="M1.500 7V1.500H6" /><path d="M3 2.500H8V8.500H3Z" fill="currentColor" /></Glyph></GreyButton>
            <GreyButton $w={16} $off aria-label="Paste"><Glyph s={9}><path d="M1.500 2H7.500V8.500H1.500ZM3 1.500H6M3 4.500H6M3 6.500H6" /></Glyph></GreyButton>
          </PanelActions>
        </Panel>

        <SideTabs>
          <SideTab $h={24} aria-label="Collapse"><Glyph s={8} sw={1.8}><path d="M2 1L5.500 4L2 7" /></Glyph></SideTab>
          <SideTab aria-label="Inquire"><GearQ /></SideTab>
          <SideTab aria-label="Learning"><FaGraduationCap size={11} /></SideTab>
          <SideTab aria-label="Community"><FaUserFriends size={11} /></SideTab>
          <SideTab aria-label="Notifications"><FaBell size={10} /></SideTab>
          <SideTab $h={20} aria-label="Warehouse"><FaGlobeAmericas size={10} /></SideTab>
          <SideTab aria-label="Cloud"><FaCloud size={11} /></SideTab>
          <SideTab $h={20} $active aria-label="Properties"><FaCog size={11} /></SideTab>
          <SideTab aria-label="Components"><FaCube size={11} /></SideTab>
          <SideTab aria-label="Applications"><Shapes /></SideTab>
        </SideTabs>
      </Workspace>

      <ToolBar>
        <Select label="Origin" value="Model origin" w={68} size={8} icon={<Glyph s={7}><circle cx="3.500" cy="3.500" r="3" /><path d="M.5 3.500H6.500M3.500 1V6" strokeWidth="1.500" /></Glyph>} />
        <Divider $l={1} $r={1} />
        <ToolGroup $w={28}>
          <GreyButton $w={13} $off aria-label="Add"><Glyph s={9}><path d="M4.500 0V9M0 4.500H9" /></Glyph></GreyButton>
          <GreyButton $w={13} $off aria-label="Delete"><Glyph s={7}><path d="M1 1H6V6.500H1Z" fill="currentColor" /></Glyph></GreyButton>
        </ToolGroup>
        <Divider $thick $l={3} $r={2} />
        <ModelSearch><input aria-label="Search in model" placeholder="Search in model" /></ModelSearch>
        <IconButton aria-label="Search" $w={18}><FaSearch size={8} /></IconButton>
        <IconButton aria-label="Search area"><Glyph s={8}><path d="M.5 .5H7.500V7.500H.5Z" stroke="#999" /><circle cx="3.500" cy="3.500" r="1.700" /><path d="M5 5L7 7" /></Glyph></IconButton>
        <Divider $thick $l={3} $r={1} />
        <Tools names={selectTools} w={307} />
        <Divider $l={1} />
        <Tools names={modelTools} w={72} />
        <Divider $l={1} />
        <Select label="Filter" value="standard" w={48} size={8} />
        <Tools names={["gear-"]} w={19} />
        <Divider $l={0} $r={1} />
        <Tools names={["pick-", "eye-"]} w={28} />
        <Divider $thick $l={3} $r={3} />
        <Tools names={snapTools} w={130} />
        <Divider $l={1} $r={1} />
        <Tools names={["glass", "ne-"]} w={28} />
        <Divider $l={1} />
        <Tools names={["spot", "handles"]} w={28} />
        <Divider $l={1} $r={3} />
        <Select label="Snap depth" value="Auto" w={35} size={8} />
        <Divider $l={3} $r={2} />
        <Select label="Plane" value="View plane" w={55} size={8} />
        <Divider $l={3} $r={2} />
        <Select label="Outline" value="Outline planes" w={68} size={8} />
        <Tools names={["eye-"]} w={19} />
        <Divider $l={0} />
      </ToolBar>
      <StatusBar>
        <StatusItem $w={70}>O</StatusItem>
        <StatusItem $w={11}>0</StatusItem>
        <StatusItem $w={33}>Pan</StatusItem>
        <StatusItem $w={147}>Current phase: 1, Phase 1</StatusItem>
        <StatusItem $w={206}>1 objects and 0 handles selected</StatusItem>
      </StatusBar>
    </Screen>
  );
}
